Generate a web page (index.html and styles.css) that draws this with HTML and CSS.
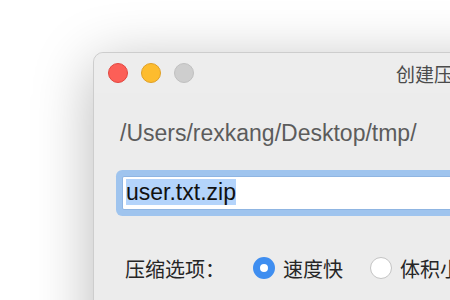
FILE: index.html
```html
<!DOCTYPE html>
<html lang="zh-CN">
<head>
  <meta charset="UTF-8"/>
  <meta name="viewport" content="width=device-width, initial-scale=1.0"/>
  <title>创建压缩文件</title>
  <link rel="stylesheet" href="styles.css">
</head>
<body>
  <div class="window">
    <div class="titlebar">
      <span class="light close"></span>
      <span class="light min"></span>
      <span class="light max"></span>
      <span class="title">创建压缩文件</span>
    </div>
    <div class="content">
      <div class="path">/Users/rexkang/Desktop/tmp/</div>
      <div class="field"><span class="selected">user.txt.zip</span></div>
      <div class="options">
        <span class="label">压缩选项：</span>
        <span class="radio on"></span>
        <span class="choice">速度快</span>
        <span class="radio"></span>
        <span class="choice">体积小</span>
      </div>
    </div>
  </div>
</body>
</html>
```

FILE: styles.css
```css
html, body { margin: 0; height: 100%; overflow: hidden; }
body { background: #fff; font-family: "Liberation Sans", "Noto Sans CJK SC", sans-serif; }

.window {
  margin: 52px 0 0 93px;
  width: 520px;
  height: 320px;
  background: #ececec;
  border: 1px solid #cdcdcd;
  border-radius: 10px 10px 0 0;
  box-shadow: 0 12px 60px rgba(0, 0, 0, 0.28);
}

.titlebar { height: 40px; display: flex; align-items: center; padding-left: 14px; background: #ededed; border-radius: 10px 10px 0 0; }
.light { width: 20px; height: 20px; border-radius: 50%; margin-right: 13px; box-sizing: border-box; }
.close { background: #fc5f57; border: 1px solid #e2463f; }
.min { background: #fdbc2e; border: 1px solid #e0a026; }
.max { background: #cecece; border: 1px solid #c0c0c0; }
.title { margin-left: 189px; font-family: "Noto Sans CJK SC", sans-serif; font-size: 19px; color: #4b4b4b; white-space: nowrap; }

.content { padding-left: 26px; }
.path { margin-top: 27px; font-size: 23px; line-height: 27px; color: #5c5c5c; white-space: nowrap; }

.field {
  margin: 29px 0 0 2px;
  height: 34px;
  box-sizing: border-box;
  background: #fff;
  border: 1px solid #8fb5e2;
  border-radius: 2px;
  box-shadow: 0 0 0 6px #9fc4ee;
  padding: 2px 0 0 3px;
  font-size: 23px;
  line-height: 27px;
  color: #111;
}
.selected { background: #b4d4fb; }

.options { margin-top: 43px; height: 30px; display: flex; align-items: center; padding-left: 5px; font-family: "Noto Sans CJK SC", sans-serif; font-size: 20px; color: #262626; white-space: nowrap; }
.label { margin-right: 28px; }
.radio { width: 22px; height: 22px; border-radius: 50%; box-sizing: border-box; background: #fff; border: 1px solid #c4c4c4; margin-right: 8px; flex: none; }
.radio.on { background: #fff; border: 7px solid #3f8ef0; }
.choice { margin-right: 27px; }
```
